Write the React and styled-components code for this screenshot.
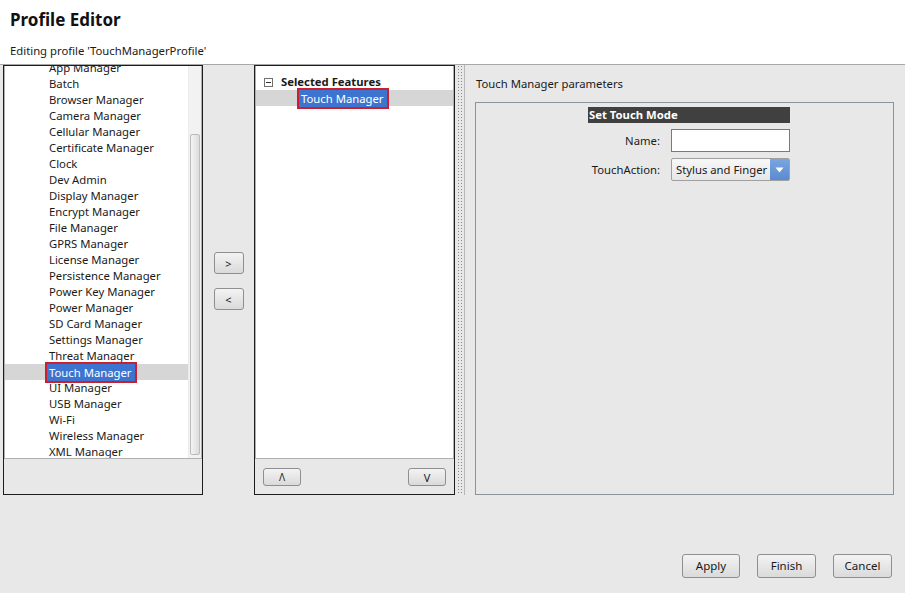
import React from "react";
import styled, { createGlobalStyle } from "styled-components";

const GlobalStyle = createGlobalStyle`
  html, body {
    margin: 0;
    padding: 0;
    background: #e8e8e8;
  }
  body {
    font-family: "Noto Sans", "Open Sans", sans-serif;
    font-size: 11.3px;
    color: #1a1a1a;
  }
`;

const Page = styled.div`
  width: 905px;
  height: 593px;
  display: flex;
  flex-direction: column;
  background: #e8e8e8;
  overflow: hidden;
`;

const Header = styled.header`
  height: 65px;
  background: #fff;
  border-bottom: 1px solid #a8a8a8;
  padding: 8px 10px 0;
  box-sizing: border-box;
`;

const Title = styled.h1`
  margin: 0;
  font-size: 17px;
  font-weight: 700;
  line-height: 24px;
  color: #111;
`;

const SubTitle = styled.div`
  margin-top: 11px;
  line-height: 16px;
`;

const Body = styled.div`
  display: flex;
  height: 430px;
  padding-left: 3px;
`;

const Panel = styled.div`
  width: ${(p) => p.$width}px;
  border: 1px solid #1c1c1c;
  box-sizing: border-box;
  display: flex;
  flex-direction: column;
  background: #e8e8e8;
`;

const WhiteBox = styled.div`
  height: 393px;
  background: #fff;
  border: 1px solid #b0b0b0;
  border-top: none;
  box-sizing: border-box;
  display: flex;
  overflow: hidden;
  position: relative;
`;

const Items = styled.div`
  flex: 1;
  margin-top: -6px;
`;

const Item = styled.div`
  height: 16px;
  line-height: 16px;
  padding-left: ${(p) => p.$indent}px;
  background: ${(p) => (p.$active ? "#d6d6d6" : "transparent")};
  white-space: nowrap;
`;

const Picked = styled.span`
  display: inline-block;
  margin-left: -2px;
  padding: 0 3px 0 2px;
  line-height: 17px;
  background: #3c74cf;
  color: #fff;
  outline: 2px solid #cc1f2e;
`;

const ScrollTrack = styled.div`
  width: 12px;
  background: #f2f2f2;
  border-left: 1px solid #ececec;
  position: relative;
`;

const ScrollThumb = styled.div`
  position: absolute;
  left: 1px;
  right: 1px;
  top: 68px;
  bottom: 3px;
  border: 1px solid #bcbcbc;
  border-radius: 2px;
  background: linear-gradient(to right, #f4f4f4, #dcdcdc);
`;

const MoveColumn = styled.div`
  width: 51px;
  display: flex;
  flex-direction: column;
  align-items: center;
  padding-top: 187px;
  gap: 14px;
  box-sizing: border-box;
`;

const Button = styled.button`
  width: ${(p) => p.$w}px;
  height: ${(p) => p.$h}px;
  padding: 0;
  border: 1px solid #8f8f8f;
  border-radius: 3px;
  background: linear-gradient(to bottom, #f3f3f3, #dadada);
  font-family: "Noto Sans", sans-serif;
  font-size: ${(p) => p.$size || 11.5}px;
  color: #1a1a1a;
  line-height: 1;
`;

const TreeRow = styled.div`
  height: 16px;
  line-height: 16px;
  display: flex;
  align-items: center;
  padding-left: ${(p) => p.$indent}px;
  background: ${(p) => (p.$active ? "#d6d6d6" : "transparent")};
  font-weight: ${(p) => (p.$bold ? 700 : 400)};
  white-space: nowrap;
`;

const Tree = styled.div`
  flex: 1;
  padding-top: 8px;
`;

const Minus = styled.span`
  width: 7px;
  height: 7px;
  border: 1px solid #707070;
  margin-right: 8px;
  position: relative;
  &::after {
    content: "";
    position: absolute;
    left: 1px;
    right: 1px;
    top: 3px;
    height: 1px;
    background: #333;
  }
`;

const OrderRow = styled.div`
  display: flex;
  justify-content: space-between;
  padding: 9px 8px 0 8px;
`;

const Sash = styled.div`
  width: 6px;
  margin: 0 1px 0 2px;
  background-image: radial-gradient(#8c8c8c 0.7px, transparent 0.9px);
  background-size: 3px 3px;
`;

const Params = styled.section`
  flex: 1;
  border-left: 1px solid #b8b8b8;
  display: flex;
  flex-direction: column;
  padding: 11px 11px 0 10px;
`;

const ParamsTitle = styled.div`
  line-height: 16px;
  margin-bottom: 10px;
  padding-left: 1px;
`;

const Group = styled.div`
  flex: 1;
  border: 1px solid #8a939b;
  padding: 4px 0 0 112px;
`;

const Form = styled.div`
  width: 202px;
  display: grid;
  grid-template-columns: 72px 119px;
  column-gap: 11px;
  row-gap: 6px;
  align-items: center;
`;

const FormHeader = styled.div`
  grid-column: 1 / 3;
  height: 16px;
  line-height: 16px;
  background: #404040;
  color: #fff;
  font-weight: 700;
  padding-left: 1px;
`;

const Label = styled.div`
  text-align: right;
`;

const TextBox = styled.input`
  height: 23px;
  box-sizing: border-box;
  border: 1px solid #7a7a7a;
  background: #fff;
  padding: 0 4px;
  font-family: inherit;
`;

const Combo = styled.div`
  height: 23px;
  box-sizing: border-box;
  border: 1px solid #a0a0a0;
  border-radius: 2px;
  background: linear-gradient(to bottom, #f8f8f8, #e6e6e6);
  display: flex;
  align-items: center;
  overflow: hidden;
`;

const ComboText = styled.span`
  flex: 1;
  padding-left: 4px;
  white-space: nowrap;
`;

const ComboArrow = styled.span`
  width: 19px;
  align-self: stretch;
  background: linear-gradient(to bottom, #7aa6e0, #5a8bd0);
  display: flex;
  align-items: center;
  justify-content: center;
`;

const Footer = styled.footer`
  display: flex;
  justify-content: flex-end;
  gap: 17px;
  padding: 59px 13px 0 0;
`;

const features = [
  "App Manager",
  "Batch",
  "Browser Manager",
  "Camera Manager",
  "Cellular Manager",
  "Certificate Manager",
  "Clock",
  "Dev Admin",
  "Display Manager",
  "Encrypt Manager",
  "File Manager",
  "GPRS Manager",
  "License Manager",
  "Persistence Manager",
  "Power Key Manager",
  "Power Manager",
  "SD Card Manager",
  "Settings Manager",
  "Threat Manager",
  "Touch Manager",
  "UI Manager",
  "USB Manager",
  "Wi-Fi",
  "Wireless Manager",
  "XML Manager",
];

const selected = "Touch Manager";

export default function App() {
  return (
    <>
      <GlobalStyle />
      <Page>
        <Header>
          <Title>Profile Editor</Title>
          <SubTitle>Editing profile 'TouchManagerProfile'</SubTitle>
        </Header>
        <Body>
          <Panel $width={200}>
            <WhiteBox>
              <Items>
                {features.map((f) => (
                  <Item key={f} $indent={44} $active={f === selected}>
                    {f === selected ? <Picked>{f}</Picked> : f}
                  </Item>
                ))}
              </Items>
              <ScrollTrack>
                <ScrollThumb />
              </ScrollTrack>
            </WhiteBox>
          </Panel>
          <MoveColumn>
            <Button $w={30} $h={22} $size={11}>&gt;</Button>
            <Button $w={30} $h={22} $size={11}>&lt;</Button>
          </MoveColumn>
          <Panel $width={201}>
            <WhiteBox>
              <Tree>
                <TreeRow $indent={8} $bold>
                  <Minus />
                  Selected Features
                </TreeRow>
                <TreeRow $indent={45} $active>
                  <Picked>Touch Manager</Picked>
                </TreeRow>
              </Tree>
            </WhiteBox>
            <OrderRow>
              <Button $w={38} $h={18} $size={10}>Λ</Button>
              <Button $w={38} $h={18} $size={11}>V</Button>
            </OrderRow>
          </Panel>
          <Sash />
          <Params>
            <ParamsTitle>Touch Manager parameters</ParamsTitle>
            <Group>
              <Form>
                <FormHeader>Set Touch Mode</FormHeader>
                <Label>Name:</Label>
                <TextBox />
                <Label>TouchAction:</Label>
                <Combo>
                  <ComboText>Stylus and Finger</ComboText>
                  <ComboArrow>
                    <svg width="9" height="6" viewBox="0 0 9 6">
                      <path d="M0.5 0.5 L8.5 0.5 L4.5 5.5 Z" fill="#fff" />
                    </svg>
                  </ComboArrow>
                </Combo>
              </Form>
            </Group>
          </Params>
        </Body>
        <Footer>
          <Button $w={58} $h={24}>Apply</Button>
          <Button $w={59} $h={24}>Finish</Button>
          <Button $w={59} $h={24}>Cancel</Button>
        </Footer>
      </Page>
    </>
  );
}
